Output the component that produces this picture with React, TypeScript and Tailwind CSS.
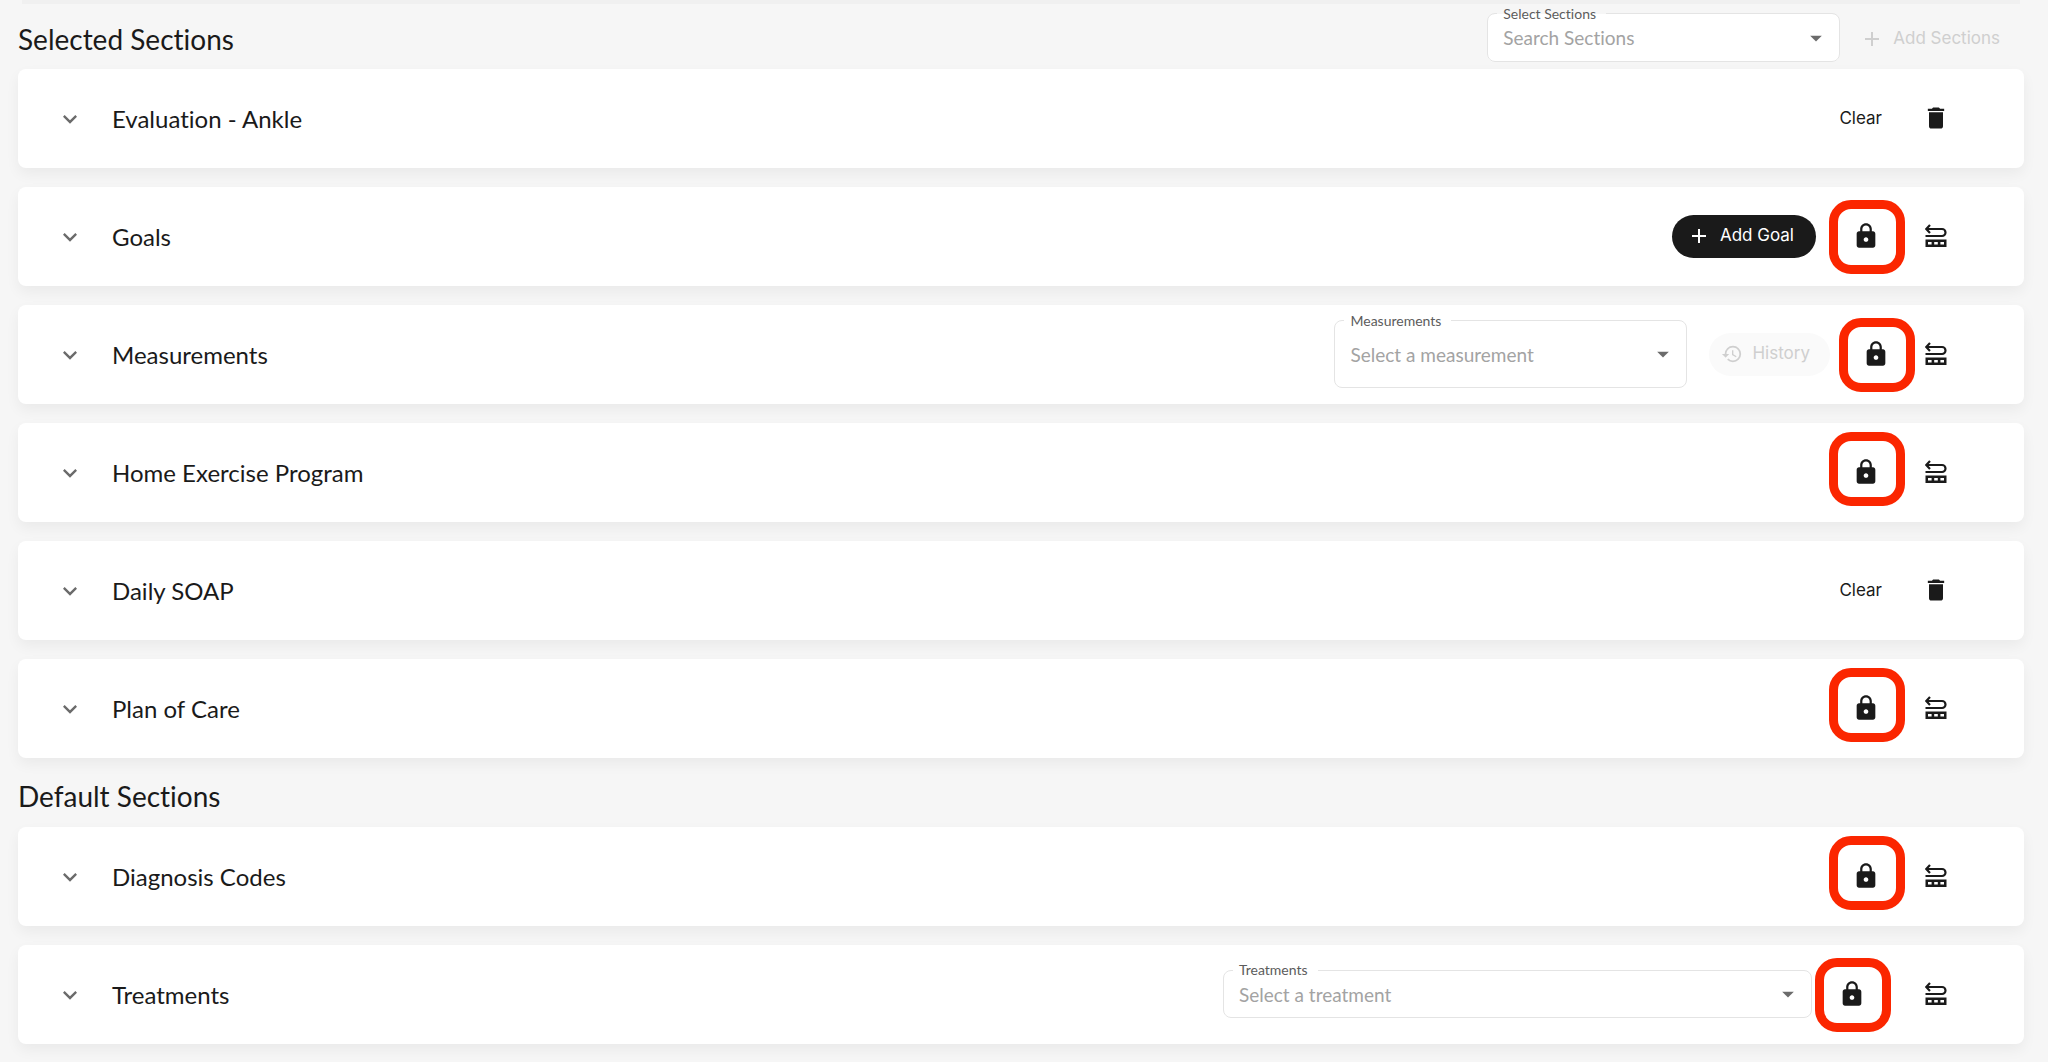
import { useId } from "react";
import type { ReactNode } from "react";
import clsx from "clsx";
import {
  MdAdd,
  MdArrowDropDown,
  MdDelete,
  MdExpandMore,
  MdHistory,
  MdLock,
} from "react-icons/md";

const CarryForwardIcon = () => (
  <svg width="22" height="24" viewBox="0 0 22 24" fill="none" aria-hidden="true">
    <path
      d="M1.5 5H17a3.5 3.5 0 0 1 0 7H0.5"
      stroke="currentColor"
      strokeWidth="2.2"
    />
    <path d="M5 1L1.2 5L5 9" stroke="currentColor" strokeWidth="2.2" />
    <path
      fillRule="evenodd"
      fill="currentColor"
      d="M0.5 15.5h21v7.5h-21zM3 18v2.5h3.6v-2.5zM9.2 18v2.5h3.6v-2.5zM15.4 18v2.5h3.6v-2.5z"
    />
  </svg>
);

const OutlinedSelect = (props: {
  label: string;
  placeholder: string;
  className?: string;
}) => {
  const { label, placeholder, className } = props;
  const id = useId();

  return (
    <div className={clsx("relative rounded-lg bg-white", className)}>
      <select
        id={id}
        defaultValue=""
        className="h-full w-full appearance-none rounded-lg bg-transparent pl-4 pr-12 pt-0.5 text-[19px] text-[#a3a3a3] outline-none"
      >
        <option value="">{placeholder}</option>
      </select>
      <MdArrowDropDown
        size={28}
        className="pointer-events-none absolute inset-y-0 right-[10px] my-auto text-[#6b6b6b]"
      />
      <fieldset className="pointer-events-none absolute inset-x-0 -top-[10px] bottom-0 rounded-lg border border-[#e4e4e4] pl-[9px]">
        <legend className="pl-[6px] pr-[10px] text-[14px] leading-5 text-[#5c5c5c]">
          <label htmlFor={id}>{label}</label>
        </legend>
      </fieldset>
    </div>
  );
};

const LockButton = (props: { raised?: boolean }) => {
  const { raised } = props;

  return (
    <button
      type="button"
      aria-label="Unlock section"
      className="relative flex h-12 w-12 items-center justify-center"
    >
      <MdLock size={28} />
      <span
        className={clsx(
          "pointer-events-none absolute -left-[13px] h-[74px] w-[76px] rounded-[22px] border-[9px] border-[#fb2600]",
          raised ? "-top-4" : "-top-3"
        )}
      />
    </button>
  );
};

const CarryForwardButton = () => (
  <button
    type="button"
    aria-label="Carry forward"
    className="flex h-12 w-12 items-center justify-center"
  >
    <CarryForwardIcon />
  </button>
);

const ClearActions = () => (
  <>
    <button type="button" className="px-2 pt-0.5 font-['Inter',sans-serif] text-[17px]">
      Clear
    </button>
    <button
      type="button"
      aria-label="Delete section"
      className="flex h-12 w-12 items-center justify-center"
    >
      <MdDelete size={28} />
    </button>
  </>
);

const SectionCard = (props: { title: string; children: ReactNode }) => {
  const { title, children } = props;

  return (
    <section className="flex h-[99px] items-center rounded-lg bg-white pl-[38px] pr-16 shadow-[0_6px_14px_rgba(0,0,0,0.05)]">
      <button type="button" aria-label={`Expand ${title}`} className="text-[#6b6b6b]">
        <MdExpandMore size={28} />
      </button>
      <h3 className="ml-7 text-[24px] leading-8">{title}</h3>
      <div className="ml-auto flex items-center gap-[22px] pb-px">{children}</div>
    </section>
  );
};

const App = () => {
  return (
    <main className="min-h-screen bg-[#f6f6f6] pl-[18px] pr-6 font-['Lato',sans-serif] text-[#1a1a1a] [font-variant-ligatures:none]">
      <div className="mx-1 h-1 bg-[#f0f0f0]" />
      <header className="flex h-[65px] items-center justify-between">
        <h2 className="pt-1 text-[28px] leading-9">Selected Sections</h2>
        <div className="flex items-center gap-5 pt-0.5 pr-6">
          <OutlinedSelect
            label="Select Sections"
            placeholder="Search Sections"
            className="h-12 w-[353px]"
          />
          <button
            type="button"
            disabled
            className="flex items-center gap-[9px] pt-0.5 font-['Inter',sans-serif] text-[17px] text-[#cfcfcf]"
          >
            <MdAdd size={24} />
            Add Sections
          </button>
        </div>
      </header>

      <div className="flex flex-col gap-[19px]">
        <SectionCard title="Evaluation - Ankle">
          <ClearActions />
        </SectionCard>

        <SectionCard title="Goals">
          <button
            type="button"
            className="mr-1 flex h-[43px] items-center gap-[9px] rounded-full bg-[#1a1a1a] pl-[15px] pr-[22px] font-['Inter',sans-serif] text-[17px] text-white"
          >
            <MdAdd size={24} />
            Add Goal
          </button>
          <LockButton />
          <CarryForwardButton />
        </SectionCard>

        <SectionCard title="Measurements">
          <OutlinedSelect
            label="Measurements"
            placeholder="Select a measurement"
            className="h-[67px] w-[353px]"
          />
          <button
            type="button"
            disabled
            className="flex h-[43px] items-center gap-[9px] rounded-full bg-[#fafafa] pl-3 pr-5 font-['Inter',sans-serif] text-[17px] text-[#cfcfcf]"
          >
            <MdHistory size={22} />
            History
          </button>
          <div className="flex gap-3">
            <LockButton />
            <CarryForwardButton />
          </div>
        </SectionCard>

        <SectionCard title="Home Exercise Program">
          <LockButton raised />
          <CarryForwardButton />
        </SectionCard>

        <SectionCard title="Daily SOAP">
          <ClearActions />
        </SectionCard>

        <SectionCard title="Plan of Care">
          <LockButton raised />
          <CarryForwardButton />
        </SectionCard>
      </div>

      <h2 className="pb-[13px] pt-5 text-[28px] leading-9">Default Sections</h2>

      <div className="flex flex-col gap-[19px]">
        <SectionCard title="Diagnosis Codes">
          <LockButton raised />
          <CarryForwardButton />
        </SectionCard>

        <SectionCard title="Treatments">
          <div className="flex items-center gap-4">
            <OutlinedSelect
              label="Treatments"
              placeholder="Select a treatment"
              className="h-12 w-[589px]"
            />
            <div className="flex gap-9">
              <LockButton />
              <CarryForwardButton />
            </div>
          </div>
        </SectionCard>
      </div>
    </main>
  );
};

export default App;
